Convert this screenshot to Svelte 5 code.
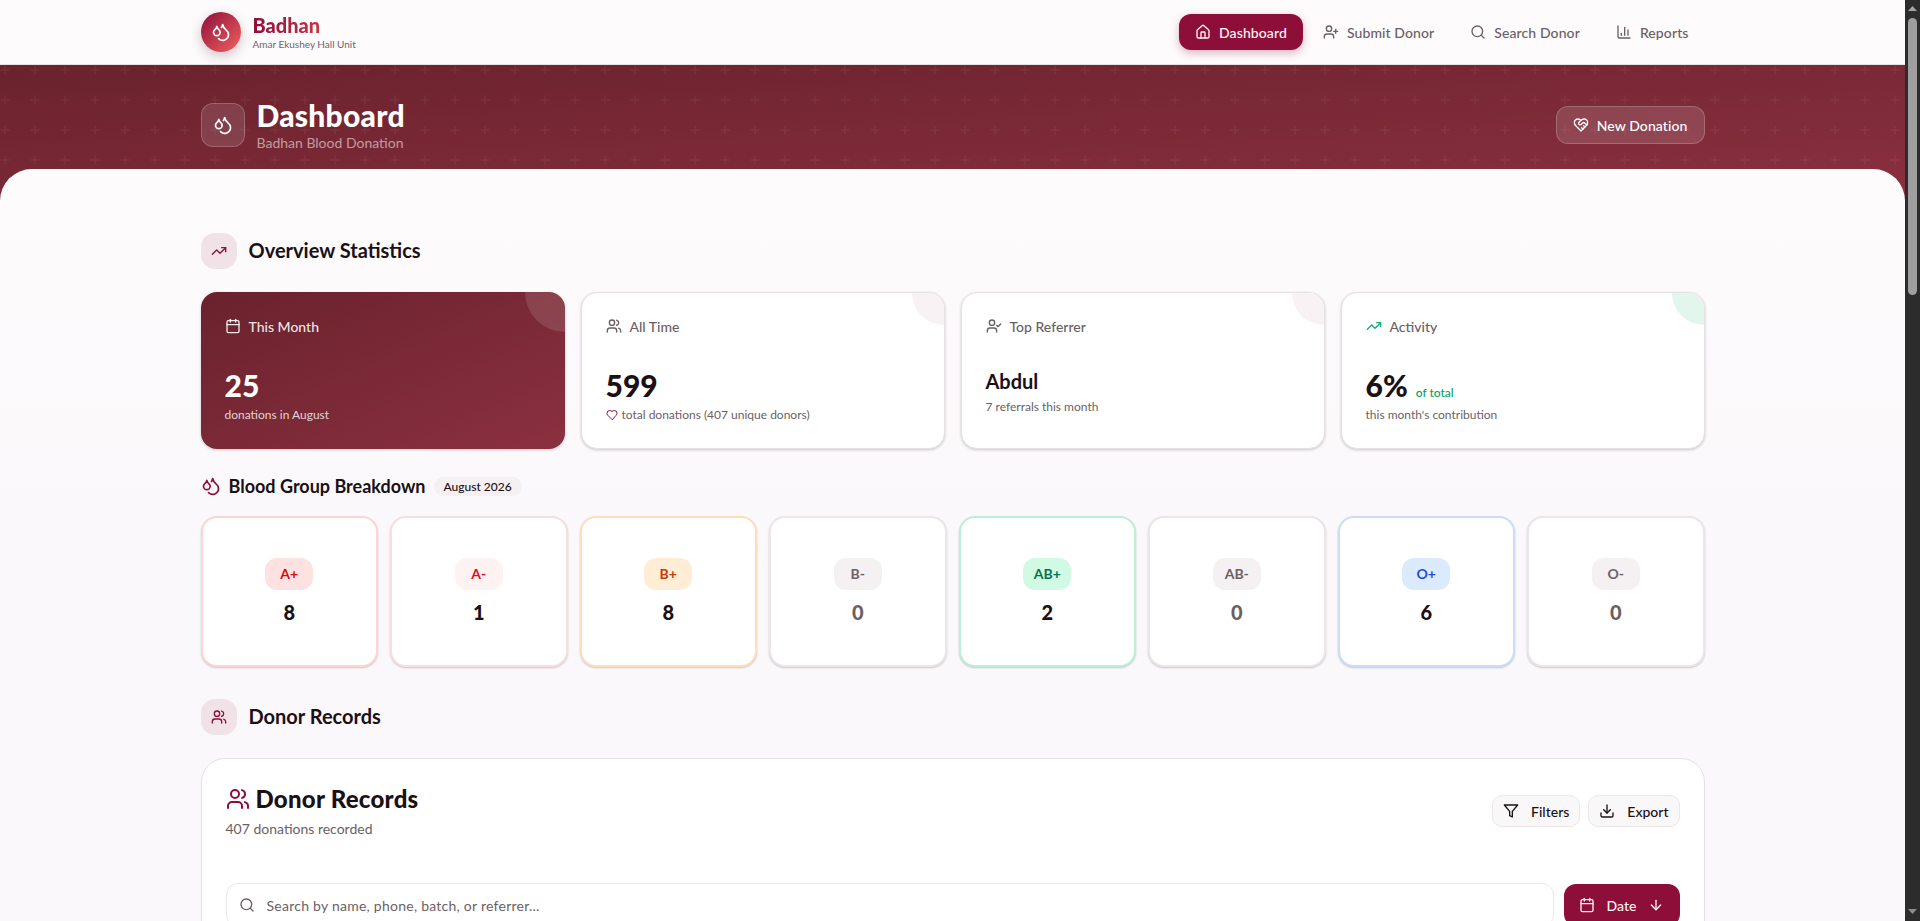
<script>
  const stats = [
    { key: 'month', label: 'This Month', icon: 'calendar', value: '25', sub: 'donations in August' },
    { key: 'all', label: 'All Time', icon: 'users', value: '599', sub: 'total donations (407 unique donors)', heart: true },
    { key: 'ref', label: 'Top Referrer', icon: 'usercheck', name: 'Abdul', sub: '7 referrals this month' },
    { key: 'act', label: 'Activity', icon: 'trend', value: '6%', note: 'of total', sub: "this month's contribution" }
  ];

  const groups = [
    { name: 'A+', count: 8, tone: 'ap' },
    { name: 'A-', count: 1, tone: 'an' },
    { name: 'B+', count: 8, tone: 'bp' },
    { name: 'B-', count: 0, tone: 'none' },
    { name: 'AB+', count: 2, tone: 'abp' },
    { name: 'AB-', count: 0, tone: 'none' },
    { name: 'O+', count: 6, tone: 'op' },
    { name: 'O-', count: 0, tone: 'none' }
  ];
</script>

{#snippet drop(size)}
  <svg width={size} height={size} viewBox="0 0 24 24" fill="none" stroke="currentColor" stroke-width="2" stroke-linecap="round" stroke-linejoin="round">
    <path d="M7 16.3c2.2 0 4-1.83 4-4.05 0-1.16-.57-2.26-1.71-3.19S7.29 6.75 7 5.3c-.29 1.45-1.14 2.84-2.29 3.76S3 11.1 3 12.25c0 2.22 1.8 4.05 4 4.05z" />
    <path d="M12.56 6.6A10.97 10.97 0 0 0 14 3.02c.5 2.5 2 4.9 4 6.5s3 3.5 3 5.5a6.98 6.98 0 0 1-11.91 4.97" />
  </svg>
{/snippet}

{#snippet icon(name, size)}
  <svg width={size} height={size} viewBox="0 0 24 24" fill="none" stroke="currentColor" stroke-width="2" stroke-linecap="round" stroke-linejoin="round">
    {#if name === 'home'}
      <path d="M15 21v-8a1 1 0 0 0-1-1h-4a1 1 0 0 0-1 1v8" />
      <path d="M3 10a2 2 0 0 1 .709-1.528l7-5.999a2 2 0 0 1 2.582 0l7 5.999A2 2 0 0 1 21 10v9a2 2 0 0 1-2 2H5a2 2 0 0 1-2-2z" />
    {:else if name === 'userplus'}
      <path d="M16 21v-2a4 4 0 0 0-4-4H6a4 4 0 0 0-4 4v2" /><circle cx="9" cy="7" r="4" />
      <line x1="19" x2="19" y1="8" y2="14" /><line x1="22" x2="16" y1="11" y2="11" />
    {:else if name === 'search'}
      <circle cx="11" cy="11" r="8" /><path d="m21 21-4.3-4.3" />
    {:else if name === 'chart'}
      <path d="M3 3v16a2 2 0 0 0 2 2h16" /><path d="M18 17V9" /><path d="M13 17V5" /><path d="M8 17v-3" />
    {:else if name === 'hearthand'}
      <path d="M19 14c1.49-1.46 3-3.21 3-5.5A5.5 5.5 0 0 0 16.5 3c-1.76 0-3 .5-4.5 2-1.5-1.5-2.74-2-4.5-2A5.5 5.5 0 0 0 2 8.5c0 2.3 1.5 4.05 3 5.5l7 7Z" />
      <path d="M12 5 9.04 7.96a2.17 2.17 0 0 0 0 3.08c.82.82 2.13.85 3 .07l2.07-1.9a2.82 2.82 0 0 1 3.79 0l2.96 2.66" />
      <path d="m18 15-2-2" /><path d="m15 18-2-2" />
    {:else if name === 'trend'}
      <polyline points="22 7 13.5 15.5 8.5 10.5 2 17" /><polyline points="16 7 22 7 22 13" />
    {:else if name === 'calendar'}
      <path d="M8 2v4" /><path d="M16 2v4" /><rect width="18" height="18" x="3" y="4" rx="2" /><path d="M3 10h18" />
    {:else if name === 'users'}
      <path d="M16 21v-2a4 4 0 0 0-4-4H6a4 4 0 0 0-4 4v2" /><circle cx="9" cy="7" r="4" />
      <path d="M22 21v-2a4 4 0 0 0-3-3.87" /><path d="M16 3.13a4 4 0 0 1 0 7.75" />
    {:else if name === 'usercheck'}
      <path d="M16 21v-2a4 4 0 0 0-4-4H6a4 4 0 0 0-4 4v2" /><circle cx="9" cy="7" r="4" /><polyline points="16 11 18 13 22 9" />
    {:else if name === 'heart'}
      <path d="M19 14c1.49-1.46 3-3.21 3-5.5A5.5 5.5 0 0 0 16.5 3c-1.76 0-3 .5-4.5 2-1.5-1.5-2.74-2-4.5-2A5.5 5.5 0 0 0 2 8.5c0 2.3 1.5 4.05 3 5.5l7 7Z" />
    {:else if name === 'filter'}
      <polygon points="22 3 2 3 10 12.46 10 19 14 21 14 12.46 22 3" />
    {:else if name === 'download'}
      <path d="M21 15v4a2 2 0 0 1-2 2H5a2 2 0 0 1-2-2v-4" /><polyline points="7 10 12 15 17 10" /><line x1="12" x2="12" y1="15" y2="3" />
    {:else if name === 'down'}
      <path d="M12 5v14" /><path d="m19 12-7 7-7-7" />
    {/if}
  </svg>
{/snippet}

<header class="topbar">
  <div class="wrap topbar-in">
    <div class="brand">
      <span class="brand-mark">{@render drop(20)}</span>
      <div>
        <div class="brand-name">Badhan</div>
        <div class="brand-sub">Amar Ekushey Hall Unit</div>
      </div>
    </div>
    <nav class="nav">
      <a class="nav-item active">{@render icon('home', 16)}Dashboard</a>
      <a class="nav-item">{@render icon('userplus', 16)}Submit Donor</a>
      <a class="nav-item">{@render icon('search', 16)}Search Donor</a>
      <a class="nav-item">{@render icon('chart', 16)}Reports</a>
    </nav>
  </div>
</header>

<section class="hero">
  <svg class="hero-pattern" width="100%" height="100%" aria-hidden="true">
    <defs>
      <pattern id="plus" width="30" height="30" patternUnits="userSpaceOnUse">
        <path d="M5 0.5v9M0.5 5h9" stroke="#fff" stroke-opacity="0.05" stroke-width="1.5" fill="none" />
      </pattern>
    </defs>
    <rect width="100%" height="100%" fill="url(#plus)" />
  </svg>
  <div class="wrap hero-in">
    <div class="hero-left">
      <span class="hero-mark">{@render drop(20)}</span>
      <div>
        <h1>Dashboard</h1>
        <p>Badhan Blood Donation</p>
      </div>
    </div>
    <button class="hero-btn">{@render icon('hearthand', 16)}New Donation</button>
  </div>
</section>

<main class="content">
  <div class="wrap">
    <div class="section-head">
      <span class="section-icon">{@render icon('trend', 16)}</span>
      <h2>Overview Statistics</h2>
    </div>

    <div class="stats">
      {#each stats as s}
        <div class="stat {s.key}">
          <div class="stat-label">{@render icon(s.icon, 16)}{s.label}</div>
          {#if s.name}
            <div class="stat-name">{s.name}</div>
          {:else}
            <div class="stat-value">{s.value}{#if s.note}<span class="stat-note">{s.note}</span>{/if}</div>
          {/if}
          <div class="stat-sub">{#if s.heart}<span class="heart">{@render icon('heart', 12)}</span>{/if}{s.sub}</div>
        </div>
      {/each}
    </div>

    <div class="breakdown-head">
      <span class="breakdown-icon">{@render drop(20)}</span>
      <h3>Blood Group Breakdown</h3>
      <span class="month-tag">August 2026</span>
    </div>

    <div class="groups">
      {#each groups as g}
        <div class="group {g.tone}">
          <span class="pill">{g.name}</span>
          <span class="count">{g.count}</span>
        </div>
      {/each}
    </div>

    <div class="section-head records-head">
      <span class="section-icon">{@render icon('users', 16)}</span>
      <h2>Donor Records</h2>
    </div>

    <div class="panel">
      <div class="panel-top">
        <div>
          <div class="panel-title">{@render icon('users', 24)}Donor Records</div>
          <div class="panel-sub">407 donations recorded</div>
        </div>
        <div class="panel-actions">
          <button class="ghost">{@render icon('filter', 16)}Filters</button>
          <button class="ghost">{@render icon('download', 16)}Export</button>
        </div>
      </div>
      <div class="tools">
        <div class="search">{@render icon('search', 16)}<span>Search by name, phone, batch, or referrer...</span></div>
        <button class="sort">{@render icon('calendar', 16)}Date{@render icon('down', 16)}</button>
      </div>
    </div>
  </div>
</main>

<div class="scrollbar" aria-hidden="true">
  <svg class="arrow" width="9" height="5" viewBox="0 0 9 5"><path d="M4.5 0 9 5H0z" fill="#a5a5a5" /></svg>
  <div class="thumb"></div>
  <svg class="arrow arrow-down" width="9" height="5" viewBox="0 0 9 5"><path d="M0 0h9L4.5 5z" fill="#8c8c8c" /></svg>
</div>

<style>
  :global(html) {
    scrollbar-width: none;
  }

  :global(body) {
    margin: 0;
    padding-right: 15px;
    font-family: "Lato", "Open Sans", sans-serif;
    background: #faf8fa;
    color: #1a1016;
  }

  h1, h2, h3, p {
    margin: 0;
  }

  button {
    font-family: inherit;
    cursor: pointer;
  }

  .wrap {
    width: 1504px;
    margin: 0 auto;
  }

  .scrollbar {
    position: fixed;
    top: 0;
    right: 0;
    bottom: 0;
    width: 15px;
    background: #2c2c2c;
    display: flex;
    flex-direction: column;
    align-items: center;
  }

  .arrow {
    margin-top: 6px;
    flex: none;
  }

  .thumb {
    margin-top: 7px;
    width: 9px;
    height: 277px;
    border-radius: 5px;
    background: #9f9f9f;
  }

  .arrow-down {
    margin-top: auto;
    margin-bottom: 7px;
  }

  .topbar {
    height: 64px;
    background: #fdfbfc;
    border-bottom: 1px solid #e6e1e3;
  }

  .topbar-in {
    height: 100%;
    display: flex;
    align-items: center;
    justify-content: space-between;
  }

  .brand {
    display: flex;
    align-items: center;
    gap: 12px;
  }

  .brand-mark {
    width: 40px;
    height: 40px;
    border-radius: 50%;
    display: flex;
    align-items: center;
    justify-content: center;
    color: #fff;
    background: linear-gradient(135deg, #8e0e3a, #f0625f);
    box-shadow: 0 4px 12px rgba(80, 30, 50, 0.25);
  }

  .brand-name {
    font-size: 20px;
    line-height: 24px;
    font-weight: 900;
    background: linear-gradient(90deg, #8e0e3a, #e5484d);
    -webkit-background-clip: text;
    background-clip: text;
    color: transparent;
  }

  .brand-sub {
    font-size: 10px;
    line-height: 14px;
    color: #6f6469;
  }

  .nav {
    display: flex;
    align-items: center;
    gap: 4px;
  }

  .nav-item {
    height: 36px;
    padding: 0 16px;
    display: flex;
    align-items: center;
    gap: 8px;
    border-radius: 12px;
    font-size: 14px;
    font-weight: 500;
    letter-spacing: 0.1px;
    color: #6b5f65;
  }

  .nav-item.active {
    background: #8e0e3a;
    color: #fdf4f6;
    box-shadow: 0 3px 8px rgba(142, 14, 58, 0.3);
  }

  .hero {
    position: relative;
    height: 136px;
    margin-bottom: -32px;
    background: linear-gradient(to bottom right, #6a222c, #8b3040);
  }

  .hero-pattern {
    position: absolute;
    inset: 0;
  }

  .hero-in {
    position: relative;
    height: 120px;
    display: flex;
    align-items: center;
    justify-content: space-between;
  }

  .hero-left {
    display: flex;
    align-items: center;
    gap: 12px;
  }

  .hero-mark {
    width: 42px;
    height: 42px;
    border: 1px solid rgba(255, 255, 255, 0.2);
    border-radius: 12px;
    display: flex;
    align-items: center;
    justify-content: center;
    color: #fff;
    background: rgba(255, 255, 255, 0.12);
  }

  .hero h1 {
    font-size: 30px;
    line-height: 36px;
    font-weight: 900;
    letter-spacing: 0.25px;
    color: #fff;
  }

  .hero p {
    font-size: 14px;
    line-height: 20px;
    color: rgba(255, 255, 255, 0.55);
  }

  .hero-btn {
    height: 38px;
    padding: 0 16px;
    display: flex;
    align-items: center;
    gap: 8px;
    border: 1px solid rgba(255, 255, 255, 0.2);
    border-radius: 12px;
    background: rgba(255, 255, 255, 0.13);
    color: #fff;
    font-size: 14px;
    font-weight: 500;
    letter-spacing: 0.1px;
  }

  .content {
    position: relative;
    border-radius: 32px 32px 0 0;
    background: linear-gradient(#fdfbfc, #faf8fa 400px);
    padding: 64px 0 48px;
  }

  .section-head {
    display: flex;
    align-items: center;
    gap: 12px;
    height: 36px;
  }

  .section-icon {
    width: 36px;
    height: 36px;
    border-radius: 14px;
    display: flex;
    align-items: center;
    justify-content: center;
    background: #f1e2e7;
    color: #8e0e3a;
  }

  .section-head h2 {
    font-size: 20px;
    font-weight: 700;
    position: relative;
    top: -1px;
  }

  .stats {
    margin-top: 23px;
    display: grid;
    grid-template-columns: repeat(4, 1fr);
    gap: 16px;
  }

  .stat {
    position: relative;
    overflow: hidden;
    height: 157px;
    box-sizing: border-box;
    padding: 23px 24px;
    border: 1px solid #e6e1e3;
    border-radius: 16px;
    background: #fff;
    box-shadow: 0 1px 3px rgba(0, 0, 0, 0.2);
  }

  .stat::after {
    content: "";
    position: absolute;
    top: -32px;
    right: -32px;
    width: 64px;
    height: 64px;
    border-radius: 50%;
    background: #f8f2f4;
  }

  .stat.month {
    border: 0;
    padding: 24px;
    background: linear-gradient(to bottom right, #6a222c, #8b3040);
    color: #fff;
  }

  .stat.month::after {
    top: -40px;
    right: -40px;
    width: 80px;
    height: 80px;
    background: rgba(255, 255, 255, 0.12);
  }

  .stat.act::after {
    background: #e3f6ee;
  }

  .stat-label {
    display: flex;
    align-items: center;
    gap: 8px;
    height: 20px;
    font-size: 14px;
    font-weight: 500;
    color: #6b5f65;
  }

  .month .stat-label {
    color: rgba(255, 255, 255, 0.9);
  }

  .act .stat-label svg {
    color: #10b077;
  }

  .stat-value {
    margin-top: 31px;
    font-size: 30px;
    line-height: 36px;
    font-weight: 900;
    color: #1a1016;
  }

  .month .stat-value {
    color: #fff;
  }

  .stat-name {
    margin-top: 31px;
    font-size: 20px;
    line-height: 28px;
    font-weight: 700;
  }

  .stat-note {
    margin-left: 8px;
    font-size: 12px;
    line-height: 1;
    font-weight: 500;
    color: #0a9d66;
  }

  .stat-sub {
    margin-top: 4px;
    font-size: 12px;
    line-height: 16px;
    color: #6b5f65;
    display: flex;
    align-items: center;
    gap: 4px;
  }

  .month .stat-sub {
    color: rgba(255, 255, 255, 0.8);
  }

  .heart {
    display: flex;
    color: #8e0e3a;
  }

  .breakdown-head {
    margin-top: 24px;
    display: flex;
    align-items: center;
    gap: 8px;
    height: 26px;
  }

  .breakdown-icon {
    display: flex;
    color: #8e0e3a;
  }

  .breakdown-head h3 {
    font-size: 18px;
    font-weight: 700;
  }

  .month-tag {
    padding: 2px 10px;
    border-radius: 10px;
    background: #f5f0f2;
    font-size: 12px;
    font-weight: 500;
  }

  .groups {
    margin-top: 17px;
    display: grid;
    grid-template-columns: repeat(8, 1fr);
    gap: 12px;
  }

  .group {
    height: 151px;
    box-sizing: border-box;
    display: flex;
    flex-direction: column;
    align-items: center;
    justify-content: center;
    gap: 8px;
    border: 2px solid #ebe6e8;
    border-radius: 16px;
    background: #fff;
    box-shadow: 0 1px 2px rgba(0, 0, 0, 0.2);
  }

  .pill {
    width: 48px;
    height: 32px;
    display: flex;
    align-items: center;
    justify-content: center;
    border-radius: 12px;
    background: #f5f0f2;
    font-size: 14px;
    font-weight: 700;
    color: #6b5f65;
  }

  .count {
    font-size: 20px;
    line-height: 28px;
    font-weight: 900;
    color: #6b5f65;
  }

  .group.ap { border-color: #fcd5d6; }
  .group.ap .pill { background: #fee2e2; color: #d40a0a; }
  .group.an { border-color: #f8dee0; }
  .group.an .pill { background: #fef2f2; color: #ea0a20; }
  .group.bp { border-color: #fde0b8; }
  .group.bp .pill { background: #ffedd5; color: #c93a06; }
  .group.abp { border-color: #bdeed8; }
  .group.abp .pill { background: #d1fae5; color: #04734f; }
  .group.op { border-color: #cbddfb; }
  .group.op .pill { background: #dbeafe; color: #1d4ed8; }
  .group.ap .count, .group.an .count, .group.bp .count, .group.abp .count, .group.op .count {
    color: #1a1016;
  }

  .records-head {
    margin-top: 32px;
  }

  .panel {
    margin-top: 23px;
    box-sizing: border-box;
    padding: 24px;
    border: 1px solid #e6e1e3;
    border-radius: 24px;
    background: #fff;
  }

  .panel-top {
    display: flex;
    align-items: flex-start;
    justify-content: space-between;
  }

  .panel-title {
    display: flex;
    align-items: center;
    gap: 6px;
    font-size: 24px;
    line-height: 32px;
    font-weight: 900;
    letter-spacing: 0.25px;
    color: #1a1016;
  }

  .panel-title svg {
    color: #8e0e3a;
  }

  .panel-sub {
    margin-top: 4px;
    font-size: 14px;
    line-height: 20px;
    color: #6b5f65;
  }

  .panel-actions {
    margin-top: 12px;
    display: flex;
    gap: 8px;
  }

  .ghost {
    height: 32px;
    padding: 0 10px;
    display: flex;
    align-items: center;
    gap: 12px;
    border: 1px solid #ece6e8;
    border-radius: 10px;
    background: #faf7f8;
    color: #1a1016;
    font-size: 14px;
    font-weight: 500;
  }

  .tools {
    margin-top: 44px;
    display: flex;
    align-items: flex-start;
    gap: 10px;
  }

  .search {
    flex: 1;
    height: 44px;
    padding: 0 12px;
    box-sizing: border-box;
    display: flex;
    align-items: center;
    gap: 12px;
    border: 1px solid #ece6e8;
    border-radius: 12px;
    color: #6b5f65;
    font-size: 14px;
    letter-spacing: 0.25px;
  }

  .sort {
    margin-top: 1px;
    width: 116px;
    height: 42px;
    display: flex;
    align-items: center;
    justify-content: center;
    gap: 12px;
    border: 0;
    border-radius: 12px;
    background: #8e0e3a;
    color: #fdf4f6;
    font-size: 14px;
    font-weight: 500;
  }
</style>
